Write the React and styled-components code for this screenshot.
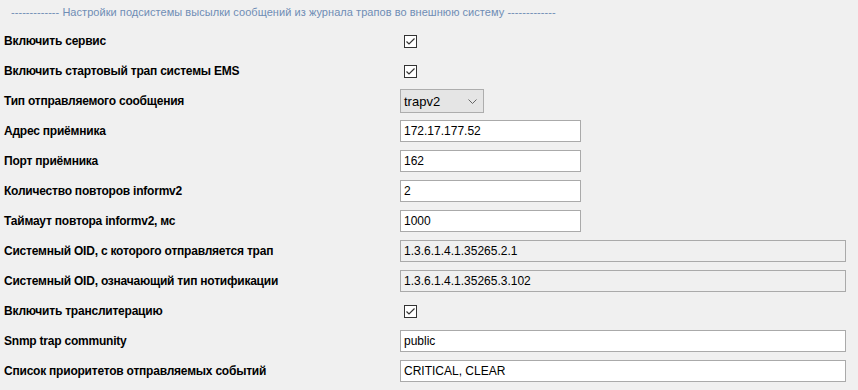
import React from 'react'
import styled, { createGlobalStyle } from 'styled-components'

const GlobalStyle = createGlobalStyle`
  html, body {
    margin: 0;
    padding: 0;
    background: #f0f0f0;
    font-family: "Liberation Sans", Arial, sans-serif;
  }
`

const fields = [
  { label: 'Включить сервис', type: 'check' },
  { label: 'Включить стартовый трап системы EMS', type: 'check' },
  { label: 'Тип отправляемого сообщения', type: 'select', value: 'trapv2' },
  { label: 'Адрес приёмника', type: 'input', value: '172.17.177.52' },
  { label: 'Порт приёмника', type: 'input', value: '162' },
  { label: 'Количество повторов informv2', type: 'input', value: '2' },
  { label: 'Таймаут повтора informv2, мс', type: 'input', value: '1000' },
  { label: 'Системный OID, с которого отправляется трап', type: 'readonly', value: '1.3.6.1.4.1.35265.2.1' },
  { label: 'Системный OID, означающий тип нотификации', type: 'readonly', value: '1.3.6.1.4.1.35265.3.102' },
  { label: 'Включить транслитерацию', type: 'check' },
  { label: 'Snmp trap community', type: 'wide', value: 'public' },
  { label: 'Список приоритетов отправляемых событий', type: 'wide', value: 'CRITICAL, CLEAR' },
]

const Check = () => (
  <CheckBox>
    <svg width="11" height="11" viewBox="0 0 11 11">
      <path d="M1.5 5.5 L4 8 L9.5 2.5" fill="none" stroke="#333" strokeWidth="1.2" />
    </svg>
  </CheckBox>
)

const Chevron = () => (
  <svg width="9" height="5" viewBox="0 0 9 5">
    <path d="M0.5 0.5 L4.5 4.5 L8.5 0.5" fill="none" stroke="#666" strokeWidth="1" />
  </svg>
)

function renderControl(f) {
  switch (f.type) {
    case 'check':
      return <Check />
    case 'select':
      return (
        <Select>
          <span>{f.value}</span>
          <Chevron />
        </Select>
      )
    case 'readonly':
      return <Input $wide readOnly defaultValue={f.value} $muted />
    case 'wide':
      return <Input $wide defaultValue={f.value} />
    default:
      return <Input defaultValue={f.value} />
  }
}

export default function App() {
  return (
    <Page>
      <GlobalStyle />
      <Header>
        ------------- Настройки подсистемы высылки сообщений из журнала трапов во внешнюю систему -------------
      </Header>
      <Form>
        {fields.map((f) => (
          <React.Fragment key={f.label}>
            <Label>{f.label}</Label>
            <Cell>{renderControl(f)}</Cell>
          </React.Fragment>
        ))}
      </Form>
    </Page>
  )
}

const Page = styled.div`
  width: 858px;
  height: 390px;
  overflow: hidden;
`

const Header = styled.div`
  height: 26px;
  line-height: 24px;
  padding-left: 11px;
  font-size: 11px;
  letter-spacing: 0.05px;
  color: #6f8db5;
  white-space: nowrap;
`

const Form = styled.div`
  display: grid;
  grid-template-columns: 400px 1fr;
  grid-auto-rows: 30px;
`

const Label = styled.div`
  display: flex;
  align-items: center;
  padding-left: 4px;
  font-size: 12px;
  font-weight: bold;
  letter-spacing: -0.22px;
  color: #000;
`

const Cell = styled.div`
  display: flex;
  align-items: center;
`

const CheckBox = styled.span`
  display: flex;
  align-items: center;
  justify-content: center;
  box-sizing: border-box;
  width: 13px;
  height: 13px;
  margin-left: 4px;
  border: 1px solid #333;
  background: #fff;
`

const Select = styled.div`
  display: flex;
  align-items: center;
  justify-content: space-between;
  box-sizing: border-box;
  width: 84px;
  height: 24px;
  padding: 0 6px 0 3px;
  border: 1px solid #adadad;
  background: #e5e5e5;
  font-size: 13px;
  color: #000;
`

const Input = styled.input.attrs({ type: 'text' })`
  box-sizing: border-box;
  width: ${(p) => (p.$wide ? '446px' : '181px')};
  height: 22px;
  margin: 0;
  padding: 0 3px;
  border: 1px solid #aaa;
  background: ${(p) => (p.$muted ? '#f0f0f0' : '#fff')};
  font-family: "Liberation Sans", Arial, sans-serif;
  font-size: 12px;
  color: #000;
  outline: none;
`
